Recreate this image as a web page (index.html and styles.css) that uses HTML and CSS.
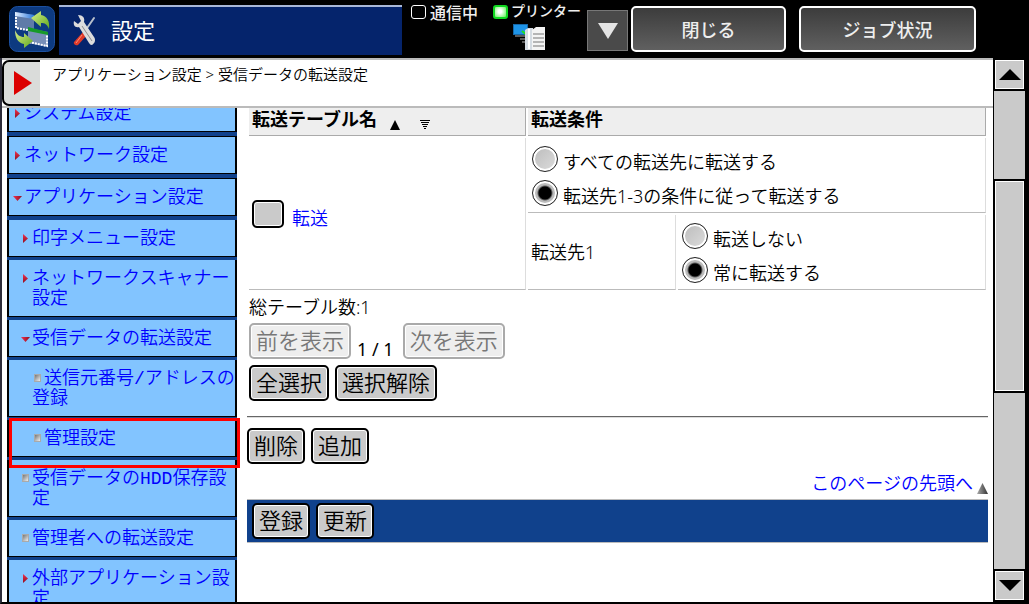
FILE: index.html
```html
<!DOCTYPE html>
<html lang="ja">
<head>
    <meta charset="UTF-8">
    <meta name="viewport" content="width=device-width, initial-scale=1.0">
    <title>設定</title>
    <link rel="stylesheet" href="styles.css">
</head>
<body>
    <header class="topbar">
        <svg class="app-icon" viewBox="0 0 46 46" aria-hidden="true">
            <defs>
                <linearGradient id="arrow" x1="0" y1="0" x2="1" y2="1">
                    <stop offset="0" stop-color="#d8f08a"/>
                    <stop offset="1" stop-color="#5fa81e"/>
                </linearGradient>
                <linearGradient id="bar" x1="0" y1="0" x2="1" y2="0">
                    <stop offset="0" stop-color="#e4f0ff"/>
                    <stop offset="1" stop-color="#2a78dc"/>
                </linearGradient>
            </defs>
            <rect x="0.5" y="0.5" width="45" height="45" rx="8" fill="#0d3a80" stroke="#1c50a0"/>
            <path d="M6 6l19 3v16L6 22z" fill="#5f7ba8"/>
            <path d="M6 6l19 3v4L6 10z" fill="url(#bar)"/>
            <path d="M7 11v11l17 3" fill="none" stroke="#fff" stroke-width="2" stroke-dasharray="2 1"/>
            <path d="M19 22l20 4v15l-20-4z" fill="#7890b8"/>
            <path d="M19 21l20 5v3l-20-4z" fill="#169a28"/>
            <path d="M20 36l18 4V29" fill="none" stroke="#fff" stroke-width="2" stroke-dasharray="2 1"/>
            <path d="M22 12l10-7v4c6 1 9 6 8 14-2-5-4-6-8-6v4z" fill="url(#arrow)"/>
            <path d="M6 24c2 5 5 7 9 7v-4l9 8-9 7v-4C9 37 6 32 6 24z" fill="url(#arrow)"/>
        </svg>
        <div class="title-panel">
            <svg class="tools-icon" viewBox="0 0 24 32" aria-hidden="true">
                <path d="M21 3L12 16" stroke="#b8c0cc" stroke-width="2" stroke-linecap="round"/>
                <path d="M10 17l4 3-9 10c-2 1-5-1-4-3z" fill="#e03a28"/>
                <path d="M9 20l-6 8" stroke="#ff8a78"/>
                <path d="M5 0c5 0 7 3 6 7l10 15c2 3 1 6-2 8-2 0-2-1-3-2L6 12C2 13 0 10 1 6l4 3 3-3z" fill="#dcdcdc"/>
                <path d="M9 11l10 15" stroke="#8c8c90"/>
            </svg>
            <h1>設定</h1>
        </div>
        <div class="status">
            <span class="lamp"></span>
            <span class="status-label">通信中</span>
        </div>
        <div class="printer">
            <div class="status">
                <span class="lamp lamp-on"></span>
                <span class="printer-label">プリンター</span>
            </div>
            <svg class="printer-icon" viewBox="0 0 33 27" aria-hidden="true">
                <rect x="0.5" y="0.5" width="14" height="10" fill="#1e94e8" stroke="#1668a8"/>
                <path d="M2 12h10M7 15h8M9 18h5" stroke="#777" stroke-width="1.5"/>
                <path d="M9 7l5 4" stroke="#1fe01f" stroke-width="2"/>
                <path d="M12 6l3-2h5v22h-8z" fill="#d4dbe2"/>
                <path d="M16 5v20" stroke="#fff" stroke-width="2"/>
                <path d="M19 6l4-3h9v23H19z" fill="#f4f4f4"/>
                <path d="M20 10h11M20 14h11M20 18h11M20 22h11" stroke="#777"/>
            </svg>
        </div>
        <button class="drop-btn" aria-label="メニュー">
            <svg viewBox="0 0 20 16" aria-hidden="true"><path d="M0 0h20L10 16z" fill="#e4e4e4"/></svg>
        </button>
        <button class="top-btn">閉じる</button>
        <button class="top-btn job-btn">ジョブ状況</button>
    </header>

    <div class="frame">
        <div class="page">
            <div class="crumb-bar">
                <button class="open-tab" aria-label="開く">
                    <svg viewBox="0 0 18 24" aria-hidden="true"><path d="M0 0l18 12L0 24z" fill="#dc0000"/></svg>
                </button>
                <p class="crumbs">アプリケーション設定 &gt; 受信データの転送設定</p>
            </div>
            <div class="columns">
                <nav class="sidebar">
                    <ul class="menu">
                        <li class="top"><a href="#"><i class="closed"></i>システム設定</a></li>
                        <li class="top"><a href="#"><i class="closed"></i>ネットワーク設定</a></li>
                        <li class="top"><a href="#"><i class="opened"></i>アプリケーション設定</a></li>
                        <li class="sub"><a href="#"><i class="closed"></i>印字メニュー設定</a></li>
                        <li class="sub"><a href="#"><i class="closed"></i>ネットワークスキャナー設定</a></li>
                        <li class="sub"><a href="#"><i class="opened"></i>受信データの転送設定</a></li>
                        <li class="sub leaf"><a href="#"><i class="dot"></i>送信元番号/アドレスの登録</a></li>
                        <li class="sub leaf marked"><a href="#"><i class="dot"></i>管理設定</a></li>
                        <li class="sub"><a href="#"><i class="dot"></i>受信データのHDD保存設定</a></li>
                        <li class="sub"><a href="#"><i class="dot"></i>管理者への転送設定</a></li>
                        <li class="sub"><a href="#"><i class="closed"></i>外部アプリケーション設定</a></li>
                    </ul>
                </nav>
                <main class="content">
                    <table class="forward">
                        <colgroup>
                            <col class="col-name">
                            <col class="col-dest">
                            <col>
                        </colgroup>
                        <thead>
                            <tr>
                                <th>
                                    <div class="sort-head">転送テーブル名
                                        <a href="#" aria-label="昇順"><svg viewBox="0 0 10 10"><path d="M5 0l5 10H0z" fill="#000"/></svg></a>
                                        <a href="#" aria-label="降順"><svg viewBox="0 0 10 10"><path d="M0 .5h10M1 2.5h8M2 4.5h6M3 6.5h4M4 8.5h2" stroke="#000"/></svg></a>
                                    </div>
                                </th>
                                <th colspan="2">転送条件</th>
                            </tr>
                        </thead>
                        <tbody>
                            <tr>
                                <td rowspan="2">
                                    <div class="name-cell">
                                        <input type="checkbox" class="check" id="row1" aria-label="転送を選択">
                                        <a href="#">転送</a>
                                    </div>
                                </td>
                                <td colspan="2">
                                    <label class="option"><input type="radio" name="cond"><span>すべての転送先に転送する</span></label>
                                    <label class="option"><input type="radio" name="cond" checked><span>転送先1-3の条件に従って転送する</span></label>
                                </td>
                            </tr>
                            <tr>
                                <td>転送先1</td>
                                <td>
                                    <label class="option"><input type="radio" name="dest1"><span>転送しない</span></label>
                                    <label class="option"><input type="radio" name="dest1" checked><span>常に転送する</span></label>
                                </td>
                            </tr>
                        </tbody>
                    </table>

                    <div class="table-tools">
                        <p>総テーブル数:1</p>
                        <div class="btn-row">
                            <button class="btn" disabled>前を表示</button>
                            <span class="pager">1 / 1</span>
                            <button class="btn" disabled>次を表示</button>
                        </div>
                        <div class="btn-row">
                            <button class="btn">全選択</button>
                            <button class="btn">選択解除</button>
                        </div>
                    </div>
                    <hr>
                    <div class="btn-row">
                        <button class="btn">削除</button>
                        <button class="btn">追加</button>
                    </div>
                    <div class="to-top">
                        <a href="#">このページの先頭へ</a>
                        <svg viewBox="0 0 11 11" aria-hidden="true">
                            <defs>
                                <linearGradient id="up"><stop offset="0" stop-color="#aaa"/><stop offset="1" stop-color="#333"/></linearGradient>
                            </defs>
                            <path d="M5.500 0L11 11H0z" fill="url(#up)"/>
                        </svg>
                    </div>
                    <div class="btn-row submit-bar">
                        <button class="btn">登録</button>
                        <button class="btn">更新</button>
                    </div>
                </main>
            </div>
        </div>

        <div class="scrollbar">
            <button class="scroll-btn" aria-label="上へ"><svg viewBox="0 0 22 11"><path d="M11 0l11 11H0z"/></svg></button>
            <div class="track track-above"></div>
            <div class="thumb"></div>
            <div class="track track-below"></div>
            <button class="scroll-btn" aria-label="下へ"><svg viewBox="0 0 22 11"><path d="M0 0h22L11 11z"/></svg></button>
        </div>
    </div>
</body>
</html>
```
FILE: styles.css
```css
*,
*::before,
*::after {
    box-sizing: border-box;
}
body {
    margin: 0;
    height: 100vh;
    display: flex;
    flex-direction: column;
    overflow: hidden;
    background: #000;
    color: #000;
    font-family: "Noto Sans", "Noto Sans CJK JP", sans-serif;
    font-size: 18px;
    font-weight: 350;
    line-height: 20px;
}
button {
    font-family: inherit;
    font-weight: inherit;
    margin: 0;
    padding: 0;
    cursor: pointer;
}
svg {
    display: block;
}
p {
    margin: 0;
}
a {
    color: #00f;
    text-decoration: none;
}

/* top bar */
.topbar {
    display: flex;
    flex: none;
    align-items: flex-start;
    height: 58px;
    padding: 5px 53px 0 9px;
    color: #eee;
}
.app-icon {
    flex: none;
    width: 46px;
    height: 46px;
    margin: 1px 4px 0 0;
}
.title-panel {
    display: flex;
    flex: 1;
    align-items: center;
    height: 50px;
    margin-right: 9px;
    padding-left: 14px;
    background: #05246c;
    border-top: 2px solid #a9b8d8;
}
.tools-icon {
    width: 24px;
    height: 32px;
    margin-right: 14px;
    fill: none;
}
h1 {
    margin: 0;
    padding-bottom: 3px;
    color: #fff;
    font-size: 22px;
    font-weight: 400;
}
.status {
    display: flex;
    gap: 4px;
    height: 16px;
    line-height: 16px;
}
.lamp {
    width: 15px;
    height: 14px;
    border: 1px solid #fff;
    border-radius: 3px;
}
.lamp-on {
    border: 2px solid #10d820;
    background: radial-gradient(circle at 45% 45%, #fff 20%, #5aee50);
}
.status-label {
    font-size: 16px;
    font-weight: 500;
}
.printer {
    margin-left: 15px;
}
.printer .status {
    gap: 3px;
}
.printer-label {
    font-size: 14px;
    font-weight: 500;
    line-height: 12px;
}
.printer-icon {
    width: 33px;
    height: 27px;
    margin: 3px auto 0 20px;
    fill: none;
}
.drop-btn {
    display: flex;
    align-items: center;
    justify-content: center;
    width: 41px;
    height: 41px;
    margin: 5px 3px 0 6px;
    background: #4a4a4a;
    border: 1px solid #777;
}
.drop-btn svg {
    width: 20px;
    height: 16px;
}
.top-btn {
    width: 155px;
    height: 46px;
    margin-top: 1px;
    color: #eee;
    font-size: 18px;
    font-weight: 500;
    background: linear-gradient(#3c3c3c, #606060);
    border: 2px solid #fff;
    border-radius: 5px;
}
.job-btn {
    width: 177px;
    margin-left: 13px;
}

/* window */
.frame {
    display: flex;
    flex: 1;
    min-height: 0;
    border-bottom: 2px solid #000;
    border-left: 2px solid #2c2c3a;
}
.page {
    display: flex;
    flex: 1;
    flex-direction: column;
    min-width: 0;
    background: #fff;
}
.crumb-bar {
    display: flex;
    flex: none;
    height: 50px;
    border-top: 2px solid #bbb;
    border-bottom: 2px solid #bbb;
}
.open-tab {
    width: 38px;
    padding-left: 10px;
    background: #dadcda;
    border: 2px solid #000;
    border-right: 0;
    border-radius: 7px 0 0 7px;
}
.open-tab svg {
    width: 18px;
    height: 24px;
}
.crumbs {
    padding: 4px 12px;
    font-size: 15px;
}
.columns {
    display: flex;
    flex: 1;
    min-height: 0;
    overflow: hidden;
}

/* side menu */
.sidebar {
    flex: none;
    width: 245px;
    padding: 0 10px 0 5px;
    overflow: hidden;
}
.menu {
    margin: -14px 0 0;
    padding: 0;
    list-style: none;
    font-family: "Liberation Mono", "Noto Sans CJK JP", monospace;
    background: #10418c;
}
.menu li {
    position: relative;
    padding-bottom: 3px;
}
.menu a {
    display: block;
    padding: 9px 0 7px 23px;
    text-indent: -12px;
    background: #82c4ff;
    border: solid #000;
    border-width: 0 2px 1px;
}
.menu .top {
    padding-bottom: 4px;
}
.menu .top a {
    padding-left: 15px;
    border-top-width: 1px;
}
.menu .leaf a {
    text-indent: 0;
}
.menu i {
    display: inline-block;
    width: 12px;
    height: 10px;
}
.menu i::before {
    content: "";
    display: block;
    width: 7px;
    height: 7px;
    margin-left: 2px;
}
.menu .closed::before {
    width: 5px;
    height: 9px;
    margin-left: 3px;
    background: linear-gradient(#f03050, #901020);
    clip-path: polygon(0 0, 100% 50%, 0 100%);
}
.menu .opened::before {
    width: 9px;
    height: 5px;
    margin: 3px 0 0 1px;
    background: linear-gradient(90deg, #f03050, #901020);
    clip-path: polygon(0 0, 100% 0, 50% 100%);
}
.menu .dot::before {
    height: 8px;
    background: linear-gradient(135deg, #777, #eee);
    border: 1px solid #aaa;
}
.menu .marked::after {
    content: "";
    position: absolute;
    z-index: 1;
    inset: -2px -3px -8px 2px;
    border: 3px solid #f00;
}

/* main column */
.content {
    flex: 1;
    min-width: 0;
    padding-right: 5px;
}
.forward {
    width: 100%;
    margin-top: -6px;
    border-collapse: separate;
    border-spacing: 2px;
    table-layout: fixed;
}
.col-name {
    width: 277px;
}
.col-dest {
    width: 148px;
}
.forward th {
    height: 32px;
    padding: 0 3px 2px;
    text-align: left;
    font-weight: 700;
    background: #eee;
    border: solid #aaa;
    border-width: 0 1px 1px 0;
}
.forward td {
    height: 75px;
    padding: 3px;
    border: solid #ddd;
    border-width: 0 1px 1px 0;
    border-bottom-color: #bbb;
}
.sort-head {
    display: flex;
    align-items: flex-start;
}
.sort-head a {
    margin: 11px 0 -1px 13px;
}
.sort-head a + a {
    margin-left: 20px;
}
.sort-head svg {
    width: 10px;
    height: 10px;
}
.name-cell {
    display: flex;
    align-items: flex-end;
    gap: 8px;
}
.check {
    appearance: none;
    width: 32px;
    height: 28px;
    margin: 0;
    background: #cacaca;
    border: 2px solid #000;
    border-radius: 5px;
    box-shadow: inset 0 0 0 1px #fff;
}
.option {
    display: flex;
    align-items: flex-end;
    gap: 5px;
    padding: 5px 0 3px;
    line-height: 20px;
}
.option input {
    appearance: none;
    flex: none;
    width: 26px;
    height: 26px;
    margin: 0 0 0 1px;
    background: linear-gradient(135deg, #bbb, #ddd);
    border: 1px solid #222;
    border-radius: 50%;
    box-shadow: inset 0 0 0 2px #fff;
}
.option input:checked {
    background: radial-gradient(circle, #000 6px, #bbb 8px);
}
.table-tools {
    display: flex;
    flex-direction: column;
    gap: 6px;
    padding: 5px 2px 0;
}
.btn-row {
    display: flex;
    gap: 6px;
}
.btn {
    height: 36px;
    padding: 0 5px 2px;
    color: #000;
    font-size: 22px;
    line-height: 30px;
    background: #cacaca;
    border: 2px solid #000;
    border-radius: 5px;
    box-shadow: inset 0 0 0 1px #fff;
}
.btn:disabled {
    color: #777;
    background: #eee;
    border-color: #aaa;
}
.pager {
    align-self: flex-end;
    padding-right: 3px;
    font-weight: 400;
}
hr {
    height: 2px;
    margin: 15px 0 10px;
    border: 0;
    border-top: 1px solid #666;
    border-bottom: 1px solid #ddd;
}
.to-top {
    display: flex;
    align-items: flex-end;
    justify-content: flex-end;
    gap: 4px;
    margin: 9px 0 5px;
}
.to-top a {
    padding-bottom: 1px;
}
.to-top svg {
    width: 11px;
    height: 11px;
}
.submit-bar {
    padding: 3px 5px;
    background: #10418c;
    border: solid #bbb;
    border-width: 1px 0;
}

/* scroll bar */
.scrollbar {
    display: flex;
    flex: none;
    flex-direction: column;
    width: 36px;
    padding: 2px 4px 0 1px;
}
.scroll-btn,
.thumb {
    width: 29px;
    margin: 0 1px 2px;
    background: #cacaca;
    border: 1px solid #fff;
}
.scroll-btn {
    display: flex;
    flex: none;
    align-items: center;
    justify-content: center;
    height: 29px;
}
.scroll-btn svg {
    width: 22px;
    height: 11px;
}
.track {
    flex: 1;
    margin-bottom: 2px;
    background: #cacaca;
}
.track-below {
    flex: 2;
}
.thumb {
    flex: 2.35;
}
```
